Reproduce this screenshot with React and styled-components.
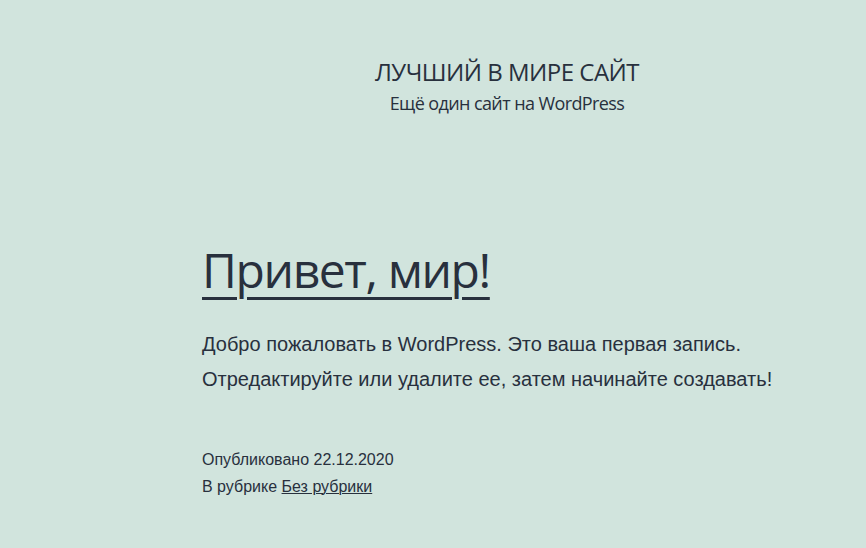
import React from 'react';
import styled, { createGlobalStyle } from 'styled-components';

const GlobalStyle = createGlobalStyle`
  html, body {
    margin: 0;
    padding: 0;
    background-color: #d1e4dd;
  }
  body {
    color: #28303d;
    font-family: "Liberation Sans", Arial, sans-serif;
  }
`;

const Page = styled.div`
  min-height: 548px;
  background-color: #d1e4dd;
  overflow: hidden;
`;

const Container = styled.div`
  width: 610px;
  margin-left: 202px;
`;

const Header = styled.header`
  text-align: center;
  padding-top: 57px;
`;

const SiteTitle = styled.p`
  margin: 0;
  font-family: "Open Sans", "Noto Sans", sans-serif;
  font-size: 24px;
  line-height: 30px;
  text-transform: uppercase;
  letter-spacing: -0.5px;
`;

const SiteDescription = styled.p`
  margin: 4px 0 0;
  font-family: "Open Sans", "Noto Sans", sans-serif;
  font-size: 18px;
  line-height: 24px;
  letter-spacing: -0.6px;
`;

const Article = styled.article`
  padding-top: 124px;
`;

const EntryTitle = styled.h2`
  margin: 0;
  font-family: "Open Sans", "Noto Sans", sans-serif;
  font-weight: 400;
  font-size: 48px;
  line-height: 62px;
  letter-spacing: -1.4px;

  a {
    color: #28303d;
    text-decoration: underline;
    text-decoration-thickness: 3px;
    text-underline-offset: 9px;
    text-decoration-skip-ink: auto;
  }
`;

const Content = styled.div`
  margin-top: 26px;
  font-size: 20px;
  line-height: 35px;

  p {
    margin: 0;
  }
`;

const Footer = styled.footer`
  margin-top: 49px;
  font-size: 16px;
  line-height: 27px;

  span {
    display: block;
  }

  a {
    color: #28303d;
    text-decoration: underline;
    text-decoration-thickness: 1px;
  }
`;

const App = () => {
  return (
    <Page>
      <GlobalStyle />
      <Container>
        <Header>
          <SiteTitle>Лучший в мире сайт</SiteTitle>
          <SiteDescription>Ещё один сайт на WordPress</SiteDescription>
        </Header>
        <Article>
          <EntryTitle>
            <a href="#">Привет, мир!</a>
          </EntryTitle>
          <Content>
            <p>Добро пожаловать в WordPress. Это ваша первая запись. Отредактируйте или удалите ее, затем начинайте создавать!</p>
          </Content>
          <Footer>
            <span>Опубликовано 22.12.2020</span>
            <span>В рубрике <a href="#">Без рубрики</a></span>
          </Footer>
        </Article>
      </Container>
    </Page>
  );
};

export default App;
